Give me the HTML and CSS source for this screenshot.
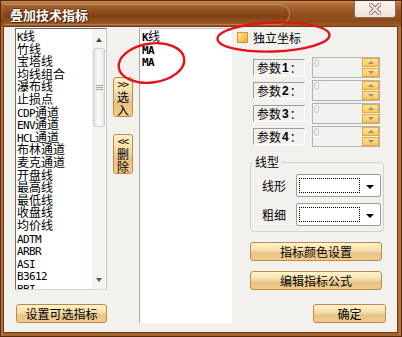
FILE: index.html
```html
<!DOCTYPE html>
<html lang="zh-CN">
<head>
<meta charset="utf-8">
<title>叠加技术指标</title>
<link rel="stylesheet" href="styles.css">
</head>
<body>
<div class="window">
  <div class="titlebar">
    <div class="title-pill"><span class="title">叠加技术指标</span></div>
    <div class="close">
      <svg width="12" height="12" viewBox="0 0 12 12">
        <path d="M1.5 1.5 L10.5 10.5 M10.5 1.5 L1.5 10.5" stroke="#8a7266" stroke-width="4" stroke-linecap="square" fill="none"/>
        <path d="M1.5 1.5 L10.5 10.5 M10.5 1.5 L1.5 10.5" stroke="#f6ece7" stroke-width="2" stroke-linecap="square" fill="none"/>
      </svg>
    </div>
  </div>
  <div class="client">
    <div class="col-left">
      <div class="listbox">
        <div class="items">
          <div class="it"><span class="en">K</span>线</div>
          <div class="it">竹线</div>
          <div class="it">宝塔线</div>
          <div class="it">均线组合</div>
          <div class="it">瀑布线</div>
          <div class="it">止损点</div>
          <div class="it"><span class="en">CDP</span>通道</div>
          <div class="it"><span class="en">ENV</span>通道</div>
          <div class="it"><span class="en">HCL</span>通道</div>
          <div class="it">布林通道</div>
          <div class="it">麦克通道</div>
          <div class="it">开盘线</div>
          <div class="it">最高线</div>
          <div class="it">最低线</div>
          <div class="it">收盘线</div>
          <div class="it">均价线</div>
          <div class="it"><span class="en">ADTM</span></div>
          <div class="it"><span class="en">ARBR</span></div>
          <div class="it"><span class="en">ASI</span></div>
          <div class="it"><span class="en">B3612</span></div>
          <div class="it"><span class="en">BBI</span></div>
          <div class="it"><span class="en">BIAS</span></div>
        </div>
        <div class="vscroll">
          <div class="sb-btn sb-up"><span class="tri-up"></span></div>
          <div class="sb-thumb"><span class="grip"></span></div>
          <div class="sb-track"></div>
          <div class="sb-btn sb-down"><span class="tri-down"></span></div>
        </div>
      </div>
      <div class="btn btn-set">设置可选指标</div>
    </div>
    <div class="col-mid">
      <div class="vbtn vbtn-add"><span class="chev">&gt;&gt;</span><span class="vch">选</span><span class="vch">入</span></div>
      <div class="vbtn vbtn-del"><span class="chev">&lt;&lt;</span><span class="vch">删</span><span class="vch">除</span></div>
    </div>
    <div class="list2">
      <div class="it"><span class="en b">K</span>线</div>
      <div class="it"><span class="en b">MA</span></div>
      <div class="it"><span class="en b">MA</span></div>
    </div>
    <div class="col-right">
      <div class="chk-row"><span class="chk"></span><span>独立坐标</span></div>
      <div class="params">
        <div class="prow"><div class="plabel">参数<b>1</b>：</div><div class="pinput"><span class="pval">0</span><span class="spin"><span class="sp"><i class="s-up"></i></span><span class="sp"><i class="s-dn"></i></span></span></div></div>
        <div class="prow"><div class="plabel">参数<b>2</b>：</div><div class="pinput"><span class="pval">0</span><span class="spin"><span class="sp"><i class="s-up"></i></span><span class="sp"><i class="s-dn"></i></span></span></div></div>
        <div class="prow"><div class="plabel">参数<b>3</b>：</div><div class="pinput"><span class="pval">0</span><span class="spin"><span class="sp"><i class="s-up"></i></span><span class="sp"><i class="s-dn"></i></span></span></div></div>
        <div class="prow"><div class="plabel">参数<b>4</b>：</div><div class="pinput"><span class="pval">0</span><span class="spin"><span class="sp"><i class="s-up"></i></span><span class="sp"><i class="s-dn"></i></span></span></div></div>
      </div>
      <div class="group">
        <div class="legend">线型</div>
        <div class="grow grow1"><span class="glabel">线形</span><div class="combo"><span class="combo-field"></span><span class="combo-arrow"><i></i></span></div></div>
        <div class="grow grow2"><span class="glabel">粗细</span><div class="combo"><span class="combo-field"></span><span class="combo-arrow"><i></i></span></div></div>
      </div>
      <div class="btn btn-wide">指标颜色设置</div>
      <div class="btn btn-wide">编辑指标公式</div>
      <div class="btn btn-ok">确定</div>
    </div>
  </div>
  <svg class="annot" width="402" height="337" viewBox="0 0 402 337">
    <ellipse cx="151.5" cy="63" rx="33" ry="19.5" transform="rotate(-8 151.5 63)" fill="none" stroke="#e4121a" stroke-width="2.4"/>
    <ellipse cx="273.5" cy="37" rx="56" ry="14.5" transform="rotate(-2 273.5 37)" fill="none" stroke="#e4121a" stroke-width="2.4"/>
  </svg>
</div>
</body>
</html>
```

FILE: styles.css
```css
html, body {
  margin: 0;
  padding: 0;
  background: #ffffff;
}

.window {
  position: relative;
  width: 402px;
  height: 337px;
  box-sizing: border-box;
  border: 1px solid #5a2b0a;
  background: linear-gradient(to right, #b8753e, #a3612c 4px, #a3612c 396px, #b8753e);
  display: flex;
  flex-direction: column;
  font-family: "Noto Sans CJK SC", "Noto Sans", sans-serif;
  font-size: 12px;
  color: #000;
  overflow: hidden;
}

/* ---------- title bar ---------- */
.titlebar {
  height: 26px;
  flex: none;
  display: flex;
  justify-content: space-between;
  align-items: flex-start;
  background: linear-gradient(#c98d5c 0, #b06d37 3px, #95521f 12px, #8c4a1a 20px, #a05e2b 26px);
}

.title-pill {
  margin: 3px 0 0 3px;
  width: 286px;
  height: 21px;
  box-sizing: border-box;
  padding: 1px 0 0 6px;
  display: flex;
  align-items: center;
  border-radius: 0 11px 11px 0;
  background: linear-gradient(#a7683a, #8a4718 45%, #7f4014 60%, #9e5c2a);
  box-shadow: inset 0 1px 0 #c48f62, inset -1px -1px 0 #b67a45;
}

.title {
  color: #ffffff;
  font-size: 13px;
  font-weight: bold;
  line-height: 14px;
  text-shadow: 1px 1px 0 #4a2106, -1px 0 0 #6a3410, 0 -1px 0 #6a3410;
}

.close {
  margin-right: 5px;
  width: 42px;
  height: 17px;
  box-sizing: border-box;
  border: 1px solid #8d6e5c;
  border-top: none;
  border-radius: 0 0 3px 3px;
  background: linear-gradient(#fbf5f2, #efe2da);
  display: flex;
  align-items: center;
  justify-content: center;
}

/* ---------- client area ---------- */
.client {
  flex: 1;
  margin: 0 4px 4px 3px;
  background: #f2f1ee;
  box-shadow: 0 0 0 1px #6e3a14;
  display: flex;
  align-items: flex-start;
  padding-left: 11px;
  box-sizing: border-box;
}

.col-left {
  width: 92px;
  margin-top: 1px;
  display: flex;
  flex-direction: column;
}

.listbox {
  height: 262px;
  box-sizing: border-box;
  border: 1px solid;
  border-color: #707070 #c9c9c6 #d4d4d0 #707070;
  background: #ffffff;
  display: flex;
}

.items {
  flex: 1;
  overflow: hidden;
  padding: 1px 0 0 1px;
}

.it {
  height: 12.6px;
  line-height: 12.6px;
  white-space: nowrap;
  font-size: 12px;
}

.en {
  font-family: "DejaVu Sans Mono", "Liberation Mono", monospace;
  font-size: 11px;
  letter-spacing: -0.6px;
}

.en.b {
  font-weight: bold;
}

.vscroll {
  width: 14px;
  display: flex;
  flex-direction: column;
  background: #f4f4f0;
}

.sb-btn {
  display: flex;
  justify-content: center;
  align-items: center;
}

.sb-up {
  height: 18px;
  padding-top: 3px;
  box-sizing: border-box;
}

.sb-down {
  height: 16px;
  padding-bottom: 2px;
  box-sizing: border-box;
}

.tri-up {
  width: 0;
  height: 0;
  border-left: 3px solid transparent;
  border-right: 3px solid transparent;
  border-bottom: 4px solid #444;
}

.tri-down {
  width: 0;
  height: 0;
  border-left: 3px solid transparent;
  border-right: 3px solid transparent;
  border-top: 4px solid #555;
}

.sb-thumb {
  height: 79px;
  margin: 1px 1px 0 1px;
  box-sizing: border-box;
  border: 1px solid #d2d2ce;
  border-radius: 2px;
  background: linear-gradient(to right, #e2e2de, #fbfbfa 45%, #e6e6e2);
  display: flex;
  justify-content: center;
  align-items: center;
}

.grip {
  width: 7px;
  height: 5px;
  background: repeating-linear-gradient(#a8a8a4 0 1px, transparent 1px 2px);
}

.sb-track {
  flex: 1;
}

/* ---------- buttons ---------- */
.btn {
  height: 19px;
  box-sizing: border-box;
  border: 1px solid #c08a44;
  border-radius: 3px;
  background: linear-gradient(#fff4d6 0%, #fde3a6 35%, #e9d6b0 50%, #e9c286 60%, #f1cd8c 100%);
  display: flex;
  align-items: center;
  justify-content: center;
  font-size: 12px;
  line-height: 12px;
  white-space: nowrap;
}

.btn-set {
  margin: 14px 0 0 1px;
  width: 91px;
}

.col-mid {
  width: 20px;
  margin-left: 6px;
  display: flex;
  flex-direction: column;
}

.vbtn {
  height: 40px;
  box-sizing: border-box;
  border: 1px solid #c08a44;
  border-radius: 3px;
  background: linear-gradient(#fff1cc 0%, #fde2a4 30%, #e7d3ac 50%, #e9c183 65%, #f3cf8d 100%);
  display: flex;
  flex-direction: column;
  align-items: center;
  justify-content: center;
  font-size: 12px;
}

.vbtn-add {
  margin-top: 50px;
}

.vbtn-del {
  margin-top: 17px;
}

.chev {
  font-family: "DejaVu Sans Mono", "Liberation Mono", monospace;
  font-size: 11px;
  letter-spacing: -1.5px;
  padding-right: 1px;
  line-height: 11px;
  height: 11px;
}

.vch {
  line-height: 13px;
  height: 13px;
}

.list2 {
  width: 93px;
  height: 295px;
  margin: 1px 0 0 6px;
  box-sizing: border-box;
  border-left: 1px solid #a9a9a6;
  border-top: 1px solid #c4c4c0;
  background: #ffffff;
  padding: 1px 0 0 2px;
}

/* ---------- right column ---------- */
.col-right {
  width: 149px;
  margin-left: 5px;
  display: flex;
  flex-direction: column;
}

.chk-row {
  margin-top: 5px;
  height: 11px;
  display: flex;
  align-items: center;
  gap: 5px;
  line-height: 12px;
}

.chk {
  width: 11px;
  height: 11px;
  box-sizing: border-box;
  border: 1px solid #d6962e;
  background: linear-gradient(135deg, #ffe9a6, #f8c14e 60%, #f3ad35);
}

.params {
  margin-top: 14px;
  display: flex;
  flex-direction: column;
  gap: 2px;
}

.prow {
  height: 21px;
  display: flex;
  align-items: center;
}

.plabel {
  margin-left: 16px;
  width: 52px;
  height: 17px;
  box-sizing: border-box;
  border: 1px solid;
  border-color: #9c9c9a #ffffff #ffffff #9c9c9a;
  padding-left: 3px;
  display: flex;
  align-items: center;
  font-size: 12px;
  line-height: 12px;
  white-space: nowrap;
}

.plabel b {
  font-family: "Liberation Sans", "DejaVu Sans", sans-serif;
  font-size: 12px;
  font-weight: bold;
  padding: 0 1px;
}

.pinput {
  margin-left: 7px;
  width: 68px;
  height: 21px;
  box-sizing: border-box;
  border: 1px solid #b3b3b0;
  background: #f1f1ef;
  display: flex;
}

.pval {
  flex: 1;
  padding: 1px 0 0 1px;
  color: #c4c4c2;
  font-family: "Liberation Sans", sans-serif;
  font-size: 10px;
  line-height: 10px;
  text-shadow: 1px 1px 0 #ffffff;
}

.spin {
  width: 17px;
  display: flex;
  flex-direction: column;
  gap: 1px;
}

.sp {
  flex: 1;
  box-sizing: border-box;
  border: 1px solid #e9a83a;
  background: linear-gradient(#fde39a, #f9c85c);
  display: flex;
  align-items: center;
  justify-content: center;
}

.s-up {
  width: 0;
  height: 0;
  border-left: 3px solid transparent;
  border-right: 3px solid transparent;
  border-bottom: 3px solid #9e8b80;
}

.s-dn {
  width: 0;
  height: 0;
  border-left: 3px solid transparent;
  border-right: 3px solid transparent;
  border-top: 3px solid #9e8b80;
}

.group {
  margin: 15px 0 0 13px;
  width: 134px;
  height: 70px;
  box-sizing: border-box;
  border: 1px solid #d3d2cc;
  border-radius: 4px;
}

.legend {
  width: fit-content;
  height: 12px;
  margin: -7px 0 0 2px;
  padding: 0 2px;
  background: #f2f1ee;
  font-size: 12px;
  line-height: 12px;
}

.grow {
  height: 23px;
  display: flex;
  align-items: center;
}

.grow1 {
  margin-top: 6px;
}

.grow2 {
  margin-top: 6px;
}

.glabel {
  margin-left: 11px;
  width: 34px;
  font-size: 12px;
  line-height: 12px;
}

.combo {
  width: 85px;
  height: 23px;
  box-sizing: border-box;
  border: 1px solid #9b9b99;
  border-radius: 2px;
  background: #ffffff;
  display: flex;
  align-items: center;
  padding-left: 2px;
}

.combo-field {
  width: 61px;
  height: 15px;
  box-sizing: border-box;
  border: 1px dotted #000000;
}

.combo-arrow {
  flex: 1;
  display: flex;
  justify-content: center;
  padding-top: 2px;
}

.combo-arrow i {
  width: 0;
  height: 0;
  border-left: 4px solid transparent;
  border-right: 4px solid transparent;
  border-top: 4px solid #000000;
}

.btn-wide {
  margin: 10px 0 0 13px;
  width: 132px;
}

.btn-ok {
  margin: 14px 0 0 76px;
  width: 73px;
}

/* ---------- annotation overlay ---------- */
.annot {
  position: absolute;
  left: -1px;
  top: -1px;
  pointer-events: none;
}
```
